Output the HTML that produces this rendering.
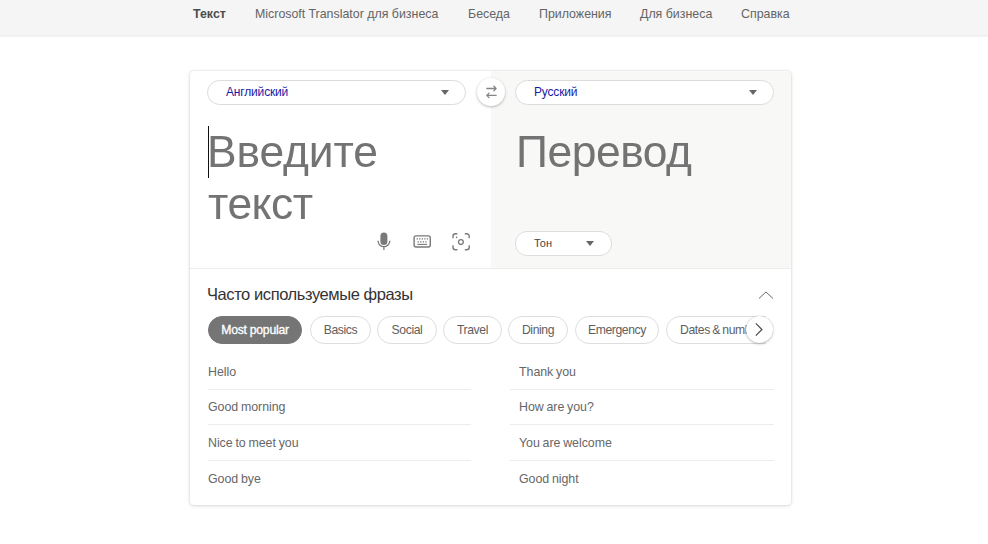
<!DOCTYPE html>
<html lang="ru">
<head>
<meta charset="utf-8">
<title>Translator</title>
<style>
*{box-sizing:border-box;margin:0;padding:0}
html,body{width:988px;height:544px;overflow:hidden;background:#fff;font-family:"Liberation Sans",sans-serif;color:#444}
#nav{position:absolute;left:0;top:0;width:988px;height:37px;background:#f5f5f5;border-bottom:1px solid #f3f3f3;box-shadow:inset 0 -1px 0 #efefef}
#nav span{position:absolute;top:7px;font-size:12.4px;color:#646464;white-space:nowrap;line-height:14px}
#nav span.b{font-weight:bold;color:#4c4c4c}
#card{position:absolute;left:190px;top:71px;width:601px;height:434px;background:#fff;border-radius:4px;box-shadow:0 0 2px rgba(0,0,0,.16),0 1px 4px rgba(0,0,0,.12)}
#right{position:absolute;left:301px;top:0;width:300px;height:197px;background-color:#f9f9f8;background-image:linear-gradient(#f9f9f8 1px,transparent 1px),linear-gradient(90deg,#f5f5f4 1px,#f9f9f8 1px);background-size:2px 2px;border-top-right-radius:4px}
#hr{position:absolute;left:0;top:197px;width:601px;height:1px;background:#ececec}
.sel{position:absolute;top:9px;height:25px;width:259px;border:1px solid #dcdcdc;border-radius:13px;background:#fff;font-size:12px;letter-spacing:-.17px;color:#1a1aa6;line-height:23px;padding-left:18px}
.sel i,.ton i{position:absolute;width:0;height:0;border-left:4.5px solid transparent;border-right:4.5px solid transparent;border-top:5px solid #666}
.sel i{right:16px;top:8.7px;border-top-width:5.5px}
#swap{position:absolute;left:287px;top:7px;width:28px;height:28px;border-radius:50%;background:#fff;box-shadow:0 1px 3px rgba(0,0,0,.28)}
.ph{position:absolute;font-size:44.4px;letter-spacing:-.45px;line-height:53px;color:#737373;white-space:nowrap;will-change:transform}
#caret{position:absolute;left:18px;top:55px;width:1px;height:52px;background:#111}
.ton{position:absolute;left:325px;top:160px;width:97px;height:25px;border:1px solid #dddddd;border-radius:12px;background:#fff;font-size:11px;color:#444;line-height:23px;padding-left:18px}
.ton i{right:17px;top:9px}
#title{position:absolute;left:17px;top:213.5px;font-size:16.5px;letter-spacing:-.42px;color:#333;line-height:18px;white-space:nowrap}
.chip{position:absolute;top:244.500px;height:28px;border:1px solid #dedede;border-radius:14px;font-size:12.2px;letter-spacing:-.4px;color:#5e5e5e;line-height:26px;text-align:center;white-space:nowrap;background:#fff}
.chip.on{background:#757575;border-color:#757575;color:#fff;-webkit-text-stroke:.3px #fff;letter-spacing:-.25px}
.p{position:absolute;font-size:12.4px;letter-spacing:-.04px;word-spacing:-.6px;color:#676767;line-height:14px;white-space:nowrap}
.l{position:absolute;height:1px;background:#ececec}
#next{position:absolute;left:556px;top:245px;width:27px;height:27px;border-radius:50%;background:#fff;box-shadow:0 0 1px rgba(0,0,0,.25),0 1px 3px rgba(0,0,0,.22)}
</style>
</head>
<body>
<div id="nav">
<span class="b" style="left:193px">Текст</span>
<span style="left:255px">Microsoft Translator для бизнеса</span>
<span style="left:468px">Беседа</span>
<span style="left:539px">Приложения</span>
<span style="left:640px">Для бизнеса</span>
<span style="left:741px">Справка</span>
</div>
<div id="card">
<div id="right"></div>
<div id="hr"></div>
<div class="sel" style="left:17px">Английский<i></i></div>
<div class="sel" style="left:325px">Русский<i></i></div>
<div id="swap"><svg width="28" height="28" viewBox="0 0 28 28"><path d="M9.800 10.500h9.300M16.900 8.300l2.200 2.200l-2.200 2.200M19.100 17.400h-9.300M12 15.200l-2.200 2.200l2.200 2.200" fill="none" stroke="#858585" stroke-width="1.300" stroke-linecap="round" stroke-linejoin="round"/></svg></div>
<div id="caret"></div>
<div class="ph" style="left:17px;top:54px;letter-spacing:-.12px">Введите</div>
<div class="ph" style="left:18px;top:106px">текст</div>
<div class="ph" style="left:326px;top:54px">Перевод</div>
<svg id="ic" style="position:absolute;left:180px;top:155px" width="110" height="30" viewBox="0 0 110 30">
<g fill="none" stroke="#7a7a7a" stroke-width="1.300">
<rect x="10.400" y="6.500" width="7" height="12.400" rx="3.500" fill="#7a7a7a" stroke="none"/>
<path d="M8 14.800a5.900 5.900 0 0 0 11.800 0M13.900 20.700v3.300"/>
<rect x="44.100" y="9.900" width="16.200" height="11.100" rx="2" stroke-width="1.400"/>
<path d="M46.600 12.800h11.500M47.600 15.900h9.500" stroke-width="1.200" stroke-dasharray="1.300 1.250"/>
<path d="M47.300 18.400h9.800" stroke-width="1.100"/>
<path d="M83 12.200v-1.900a2.500 2.500 0 0 1 2.500 -2.500h1.900M94.800 7.800h1.900a2.500 2.500 0 0 1 2.500 2.500v1.900M99.200 19.300v1.900a2.500 2.500 0 0 1 -2.500 2.500h-1.900M87.400 23.700h-1.900a2.500 2.500 0 0 1 -2.500 -2.500v-1.900" stroke-width="1.400"/>
<circle cx="90.900" cy="16.100" r="2.400" stroke-width="1.300"/>
<circle cx="86.600" cy="11.400" r="0.800" fill="#7a7a7a" stroke="none"/>
</g></svg>
<div class="ton">Тон<i></i></div>
<div id="title">Часто используемые фразы</div>
<svg style="position:absolute;left:568px;top:218.500px" width="16" height="10" viewBox="0 0 16 10"><path d="M1 8.500l7-6.500l7 6.500" fill="none" stroke="#6a6a6a" stroke-width="1"/></svg>
<div class="chip on" style="left:18px;width:94px">Most popular</div>
<div class="chip" style="left:120px;width:61px">Basics</div>
<div class="chip" style="left:187px;width:60px">Social</div>
<div class="chip" style="left:253px;width:59px">Travel</div>
<div class="chip" style="left:318px;width:60px">Dining</div>
<div class="chip" style="left:385px;width:84px">Emergency</div>
<div style="position:absolute;left:470px;top:240px;width:106px;height:40px;overflow:hidden"><div class="chip" style="left:6px;top:4.500px;width:112px;text-align:left;padding-left:13px;word-spacing:-.6px">Dates &amp; numbers</div></div>
<div id="next"><svg width="27" height="27" viewBox="0 0 28 28" style="display:block"><path d="M10.200 7.700l6.300 6.300l-6.300 6.300" fill="none" stroke="#505050" stroke-width="1.300"/></svg></div>
<div class="p" style="left:18px;top:293.800px">Hello</div>
<div class="p" style="left:18px;top:329px">Good morning</div>
<div class="p" style="left:18px;top:365px">Nice to meet you</div>
<div class="p" style="left:18px;top:400.500px">Good bye</div>
<div class="p" style="left:329px;top:293.800px">Thank you</div>
<div class="p" style="left:329px;top:329px">How are you?</div>
<div class="p" style="left:329px;top:365px">You are welcome</div>
<div class="p" style="left:329px;top:400.500px">Good night</div>
<div class="l" style="left:18px;width:263px;top:318px"></div>
<div class="l" style="left:18px;width:263px;top:353px"></div>
<div class="l" style="left:18px;width:263px;top:389px"></div>
<div class="l" style="left:320px;width:264px;top:318px"></div>
<div class="l" style="left:320px;width:264px;top:353px"></div>
<div class="l" style="left:320px;width:264px;top:389px"></div>
</div>
</body>
</html>
